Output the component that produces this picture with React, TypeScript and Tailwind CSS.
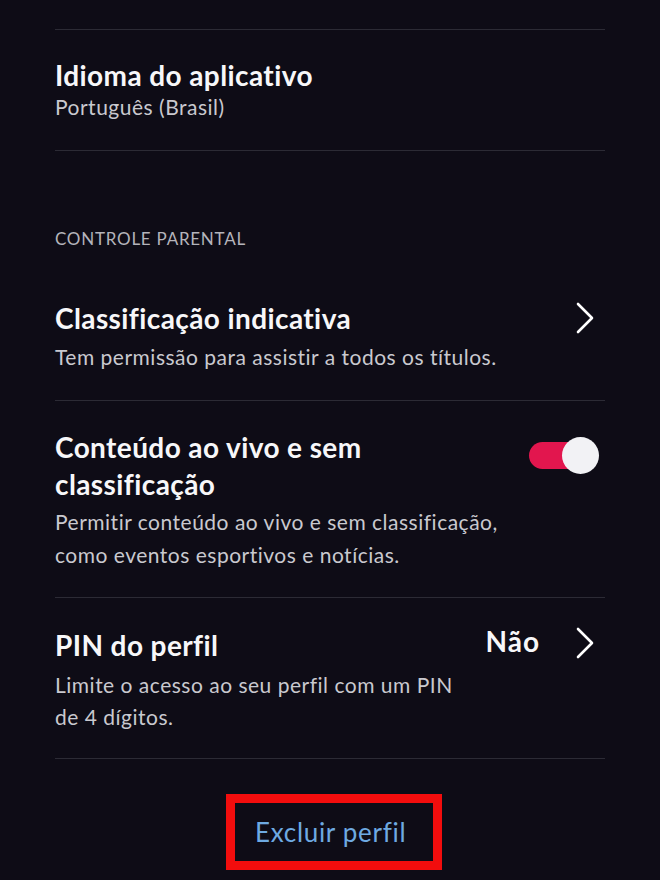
function Divider() {
  return <div className="h-px bg-[#2c2b35]" />;
}

function Chevron() {
  return (
    <svg width="18" height="32" viewBox="0 0 18 32" fill="none" className="block">
      <polyline points="2,2 16,16 2,30" stroke="#ffffff" strokeWidth="2.6" strokeLinecap="round" strokeLinejoin="round" />
    </svg>
  );
}

export default function App() {
  return (
    <main className="min-h-[880px] bg-[#0e0c16] text-white font-['Lato',sans-serif]">
      <div className="px-[55px] pt-[29px]">
        <Divider />
        <div className="pt-[28px] pb-[28px]">
          <h2 className="text-[28px] font-bold leading-[34px] tracking-[0.4px] text-[#f7f7f9]">Idioma do aplicativo</h2>
          <p className="text-[21px] leading-[30px] tracking-[0.5px] text-[#c9c9cf]">Português (Brasil)</p>
        </div>
        <Divider />

        <p className="mt-[76px] text-[17px] leading-[24px] tracking-[0.75px] text-[#b4b4bb]">CONTROLE PARENTAL</p>

        <div className="pt-[49px] pb-[28px] flex items-start justify-between">
          <div>
            <h2 className="text-[28px] font-bold leading-[36px] tracking-[0.4px] text-[#f7f7f9]">Classificação indicativa</h2>
            <p className="mt-[6px] text-[21px] leading-[30px] tracking-[0.5px] text-[#c9c9cf]">Tem permissão para assistir a todos os títulos.</p>
          </div>
          <div className="pt-[2px] mr-[11px]"><Chevron /></div>
        </div>
        <Divider />

        <div className="pt-[28px] pb-[26px] flex items-start justify-between">
          <div>
            <h2 className="text-[28px] font-bold leading-[37px] tracking-[0.4px] text-[#f7f7f9]">Conteúdo ao vivo e sem<br />classificação</h2>
            <p className="mt-[2px] text-[21px] leading-[33px] tracking-[0.5px] text-[#c9c9cf]">Permitir conteúdo ao vivo e sem classificação,<br />como eventos esportivos e notícias.</p>
          </div>
          <div className="relative mt-[8px] w-[70px] h-[37px] shrink-0 mr-[6px]">
            <div className="absolute left-0 top-[5px] w-[54px] h-[27px] rounded-full bg-[#e2164e]" />
            <div className="absolute right-0 top-0 w-[37px] h-[37px] rounded-full bg-[#f2f2f5]" />
          </div>
        </div>
        <Divider />

        <div className="pt-[29px] pb-[25px] flex items-start justify-between">
          <div>
            <h2 className="text-[28px] font-bold leading-[36px] tracking-[0.4px] text-[#f7f7f9]">PIN do perfil</h2>
            <p className="mt-[6px] text-[21px] leading-[32px] tracking-[0.5px] text-[#c9c9cf]">Limite o acesso ao seu perfil com um PIN<br />de 4 dígitos.</p>
          </div>
          <div className="flex items-start gap-[36px] mr-[11px]">
            <span className="text-[28px] font-bold leading-[28px] tracking-[1px] text-[#f7f7f9]">Não</span>
            <Chevron />
          </div>
        </div>
        <Divider />

        <div className="flex justify-center pt-[35px]">
          <div className="ml-[8px] border-[9px] border-[#f20d0d] w-[216px] h-[76px] flex items-center pl-[20px]">
            <button className="text-[26px] tracking-[0.7px] text-[#6eaae2] leading-[30px]">Excluir perfil</button>
          </div>
        </div>
      </div>
    </main>
  );
}
